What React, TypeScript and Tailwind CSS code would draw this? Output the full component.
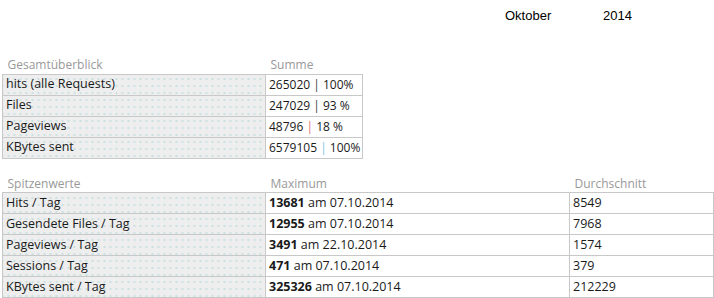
import React from "react";

const dotted =
  "bg-[#eeeeee] bg-[radial-gradient(circle,#a9d3d3_0.8px,transparent_1px)] bg-[length:6px_7px] bg-[position:2px_1px]";

const font = { fontFamily: '"Open Sans", "DejaVu Sans", sans-serif' };

function Pipe({ color }: { color: string }) {
  return <span style={{ color }}>|</span>;
}

export default function App() {
  const t1: [string, React.ReactNode][] = [
    ["hits (alle Requests)", <>265020 <Pipe color="#444" /> 100%</>],
    ["Files", <>247029 <Pipe color="#444" /> 93 %</>],
    ["Pageviews", <>48796 <Pipe color="#e07070" /> 18 %</>],
    ["KBytes sent", <>6579105 <Pipe color="#7fc0e8" /> 100%</>],
  ];
  const t2: [string, string, string, string][] = [
    ["Hits / Tag", "13681", "07.10.2014", "8549"],
    ["Gesendete Files / Tag", "12955", "07.10.2014", "7968"],
    ["Pageviews / Tag", "3491", "22.10.2014", "1574"],
    ["Sessions / Tag", "471", "07.10.2014", "379"],
    ["KBytes sent / Tag", "325326", "07.10.2014", "212229"],
  ];
  return (
    <div className="w-[714px] h-[298px] bg-white overflow-hidden text-[#1a1a1a]" style={font}>
      <div className="flex h-[25px] items-end text-[13px] text-black" style={{ fontFamily: '"Liberation Sans", Arial, sans-serif' }}>
        <span className="ml-[505px] w-[98px]">Oktober</span>
        <span>2014</span>
      </div>
      <table className="ml-[2px] mt-[29px] w-[360px] table-fixed border-collapse text-[12.5px] leading-none">
        <colgroup>
          <col className="w-[263px]" />
          <col className="w-[97px]" />
        </colgroup>
        <thead>
          <tr className="h-[20px] text-[#999] text-[12px]">
            <th className="text-left font-normal pl-[5px] pt-[2px]">Gesamtüberblick</th>
            <th className="text-left font-normal pl-[5px] pt-[2px]">Summe</th>
          </tr>
        </thead>
        <tbody>
          {t1.map(([a, b], i) => (
            <tr key={i} className="h-[21px]">
              <td className={`border border-[#c8c8c8] pl-[3px] ${dotted}`}>{a}</td>
              <td className="border border-[#c8c8c8] pl-[3px] whitespace-nowrap text-[12px]">{b}</td>
            </tr>
          ))}
        </tbody>
      </table>
      <table className="ml-[2px] mt-[14px] w-[711px] table-fixed border-collapse text-[12.5px] leading-none">
        <colgroup>
          <col className="w-[263px]" />
          <col className="w-[304px]" />
          <col className="w-[144px]" />
        </colgroup>
        <thead>
          <tr className="h-[20px] text-[#999] text-[12px]">
            <th className="text-left font-normal pl-[5px] pt-[3px]">Spitzenwerte</th>
            <th className="text-left font-normal pl-[5px] pt-[3px]">Maximum</th>
            <th className="text-left font-normal pl-[5px] pt-[3px]">Durchschnitt</th>
          </tr>
        </thead>
        <tbody>
          {t2.map(([a, b, c, d], i) => (
            <tr key={i} className="h-[21px]">
              <td className={`border border-[#c8c8c8] pl-[3px] ${dotted}`}>{a}</td>
              <td className="border border-[#c8c8c8] pl-[3px] whitespace-nowrap">
                <b>{b}</b> am {c}
              </td>
              <td className="border border-[#c8c8c8] pl-[3px]">{d}</td>
            </tr>
          ))}
        </tbody>
      </table>
    </div>
  );
}
